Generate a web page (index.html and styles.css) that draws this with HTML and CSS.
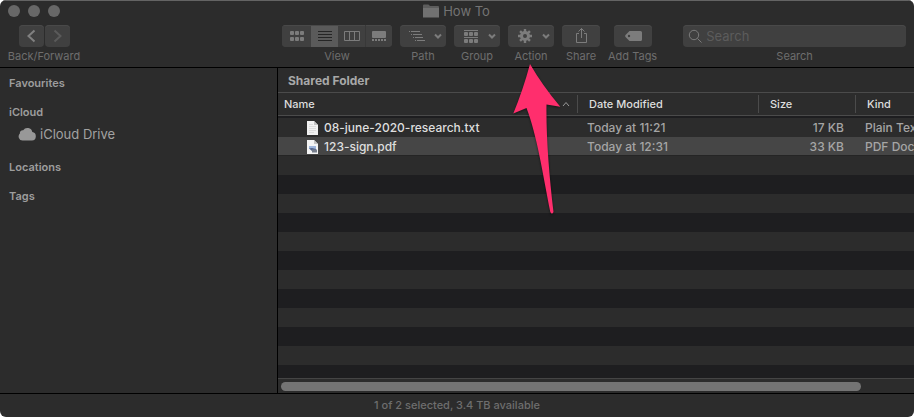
FILE: index.html
```html
<!DOCTYPE html>
<html lang="en">
<head>
<meta charset="utf-8">
<title>How To</title>
<link rel="stylesheet" href="styles.css">
</head>
<body>
<div class="window">
  <header class="chrome">
    <div class="titlebar">
      <div class="lights"><i></i><i></i><i></i></div>
      <svg class="folder" width="16" height="14" viewBox="0 0 16 14"><path d="M0 1.5Q0 .5 1 .5H5.5L7 2H15Q16 2 16 3V13H0Z" fill="#5d5d5d"/><path d="M0 4H16V13.5H0Z" fill="#717171"/></svg>
      <h1>How To</h1>
    </div>
    <div class="toolbar">
      <div class="tool nav-tool">
        <div class="pair">
          <button class="btn" aria-label="Back"><svg width="25" height="22" viewBox="0 0 25 22"><path d="M15.5 5.5 9.5 11l6 5.500" class="stroke bright"/></svg></button>
          <button class="btn" aria-label="Forward"><svg width="25" height="22" viewBox="0 0 25 22"><path d="M9.500 5.500 15.500 11l-6 5.500" class="stroke dim"/></svg></button>
        </div>
        <span class="label">Back/Forward</span>
      </div>
      <div class="tool">
        <div class="segments">
          <button class="seg" aria-label="Icons"><svg width="16" height="12" viewBox="0 0 16 12"><g fill="#7c7c7c"><rect x="1" y="1" width="4" height="4" rx="1"/><rect x="6" y="1" width="4" height="4" rx="1"/><rect x="11" y="1" width="4" height="4" rx="1"/><rect x="1" y="7" width="4" height="4" rx="1"/><rect x="6" y="7" width="4" height="4" rx="1"/><rect x="11" y="7" width="4" height="4" rx="1"/></g></svg></button>
          <button class="seg seg-on" aria-label="List"><svg width="14" height="12" viewBox="0 0 14 12"><path d="M0 1.500H14M0 4.500H14M0 7.500H14M0 10.500H14" stroke="#252525"/></svg></button>
          <button class="seg" aria-label="Columns"><svg width="16" height="12" viewBox="0 0 16 12"><path d="M.5 1.500H15.500V10.500H.5ZM5.500 1.500V10.500M10.500 1.500V10.500" fill="none" stroke="#7c7c7c"/></svg></button>
          <button class="seg" aria-label="Gallery"><svg width="16" height="12" viewBox="0 0 16 12"><rect x="1" y="1" width="14" height="7" rx="1" fill="#7c7c7c"/><path d="M1 10H15" stroke="#7c7c7c" stroke-width="2" stroke-dasharray="2 1"/></svg></button>
        </div>
        <span class="label">View</span>
      </div>
      <div class="tool">
        <button class="btn menu" aria-label="Path"><svg width="46" height="22" viewBox="0 0 46 22"><path d="M9 6.500h1M11 6.500h9M11 9.500h1M13 9.500h9M13 12.500h1M15 12.500h8M15 15.500h1M17 15.500h8" class="line"/><path d="M35 9.500l3 3 3-3" class="chev"/></svg></button>
        <span class="label">Path</span>
      </div>
      <div class="tool">
        <button class="btn menu" aria-label="Group"><svg width="46" height="22" viewBox="0 0 46 22"><path d="M10 5.500H24M10 12.500H24" class="line"/><g fill="#7c7c7c"><rect x="10" y="7" width="4" height="4" rx="1"/><rect x="15" y="7" width="4" height="4" rx="1"/><rect x="20" y="7" width="4" height="4" rx="1"/><rect x="10" y="14" width="4" height="4" rx="1"/><rect x="15" y="14" width="4" height="4" rx="1"/><rect x="20" y="14" width="4" height="4" rx="1"/></g><path d="M35 9.500l3 3 3-3" class="chev"/></svg></button>
        <span class="label">Group</span>
      </div>
      <div class="tool">
        <button class="btn menu" aria-label="Action"><svg width="46" height="22" viewBox="0 0 46 22"><circle cx="17" cy="11" r="3.500" fill="none" stroke="#7c7c7c" stroke-width="3"/><g stroke="#7c7c7c" stroke-width="2.400"><path d="M17 4v3M17 15v3M10 11h3M21 11h3M12.050 6.050l2.100 2.100M19.850 13.850l2.100 2.100M21.950 6.050l-2.100 2.100M14.150 13.850l-2.100 2.100"/></g><path d="M35 9.500l3 3 3-3" class="chev"/></svg></button>
        <span class="label">Action</span>
      </div>
      <div class="tool">
        <button class="btn single" aria-label="Share"><svg width="38" height="22" viewBox="0 0 38 22"><path d="M17 8.500H14.500V17.500H24.500V8.500H22M19.500 13V3.500M16.500 6.500l3-3 3 3" class="line"/></svg></button>
        <span class="label">Share</span>
      </div>
      <div class="tool">
        <button class="btn single" aria-label="Add Tags"><svg width="38" height="22" viewBox="0 0 38 22"><path fill-rule="evenodd" d="M15.500 6H26.500Q28 6 28 7.500V14.500Q28 16 26.500 16H15.500L11.500 12Q10.700 11 11.500 10ZM15 9.800A1.200 1.200 0 1 0 15 12.200 1.200 1.200 0 1 0 15 9.800Z" fill="#7c7c7c"/></svg></button>
        <span class="label">Add Tags</span>
      </div>
      <div class="tool search">
        <div class="field">
          <svg width="14" height="14" viewBox="0 0 14 14"><circle cx="6" cy="6" r="4.700" class="line"/><path d="M9.500 9.500l4 4" class="line"/></svg>
          <input id="search" type="search" placeholder="Search">
        </div>
        <label class="label" for="search">Search</label>
      </div>
    </div>
  </header>

  <div class="body">
    <nav class="sidebar">
      <h2>Favourites</h2>
      <h2>iCloud</h2>
      <a href="#drive" class="place"><svg width="18" height="14" viewBox="0 0 18 14"><path d="M4.500 13.500A4 4 0 0 1 1.900 6.600 2.900 2.900 0 0 1 5.200 3.200 5 5 0 0 1 14.300 5 4.300 4.300 0 0 1 14 13.500Z" fill="#989898"/></svg>iCloud Drive</a>
      <h2>Locations</h2>
      <h2>Tags</h2>
    </nav>
    <main class="content">
      <h2 class="folder-name">Shared Folder</h2>
      <div class="files">
        <table>
          <colgroup><col class="c-name"><col class="c-date"><col class="c-size"><col class="c-kind"></colgroup>
          <thead>
            <tr>
              <th><div class="head">Name<svg width="8" height="6" viewBox="0 0 8 6"><path d="M1 5l3-3.500L7 5" class="sort"/></svg></div></th>
              <th><div class="head">Date Modified</div></th>
              <th><div class="head">Size</div></th>
              <th><div class="head">Kind</div></th>
            </tr>
          </thead>
          <tbody>
            <tr>
              <td><div class="file"><svg width="11" height="14" viewBox="0 0 11 14"><path d="M0 0H7L11 4V14H0Z" fill="#f1f1f1"/><path d="M7 0V4H11Z" fill="#c3c3c3"/><path d="M2 3.500H6M2 5.500H9M2 7.500H9M2 9.500H9M2 11.500H7" stroke="#dcdcdc"/></svg>08-june-2020-research.txt</div></td>
              <td>Today at 11:21</td><td>17 KB</td><td>Plain Text</td>
            </tr>
            <tr class="selected">
              <td><div class="file"><svg width="11" height="14" viewBox="0 0 11 14"><path d="M0 0H7L11 4V14H0Z" fill="#f4f4f4"/><path d="M7 0V4H11Z" fill="#c3c3c3"/><path d="M2 6H9V9H2Z" fill="#9fb6dc"/><path d="M2 8.500L5 8 9 9V11H5Z" fill="#52638a"/><path d="M5 9.500H10V12.500H5Z" fill="#777e8c"/></svg>123-sign.pdf</div></td>
              <td>Today at 12:31</td><td>33 KB</td><td>PDF Document</td>
            </tr>
          </tbody>
        </table>
      </div>
      <div class="scroller"><div class="thumb"></div></div>
    </main>
  </div>
  <footer class="status">1 of 2 selected, 3.4 TB available</footer>

  <svg class="pointer" width="50" height="154" viewBox="0 0 50 154"><path d="M20 4Q32 25 50.300 46.800L36.500 44.500C36 75 39 115 43.500 152Q42 155 40.300 152C33 115 27 75 16.500 48L3.300 53.500Q13 30 20 4Z" fill="#ff2e6d"/></svg>
</div>
</body>
</html>
```
FILE: styles.css
```css
* { box-sizing: border-box; }

body {
  margin: 0;
  background: #fff;
  color: #9d9d9d;
  font: 11px/16px Inter, "Liberation Sans", sans-serif;
}

h1, h2 { margin: 0; font-size: inherit; }

button { padding: 0; border: 0; font: inherit; }

svg { display: block; flex: none; }

.window {
  position: relative;
  display: flex;
  flex-direction: column;
  height: 100vh;
  overflow: hidden;
  border-radius: 6px;
  background: #2c2c2c;
}

.chrome {
  flex: none;
  border-top: 1px solid #646464;
  border-bottom: 1px solid #000;
}

.titlebar {
  display: grid;
  grid-template-columns: 1fr auto auto 1fr;
  align-items: center;
  gap: 4px;
  height: 20px;
  padding: 0 9px 0 8px;
}

.titlebar h1 {
  color: #747474;
  font-size: 13px;
  font-weight: 400;
}

.lights { display: flex; gap: 8px; }

.lights i {
  width: 12px;
  height: 12px;
  border-radius: 50%;
  background: #686868;
}

.toolbar {
  display: flex;
  gap: 8px;
  height: 46px;
  padding: 4px 8px 0;
}

.tool {
  display: flex;
  flex-direction: column;
  flex: none;
  align-items: center;
  gap: 1px;
}

.nav-tool { width: 72px; margin-right: 194px; }

.label { color: #6e6e6e; white-space: nowrap; }

.pair { display: flex; gap: 1px; }

.btn, .segments, .field {
  height: 22px;
  overflow: hidden;
  border-radius: 4px;
  background: #404040;
  box-shadow: inset 0 1px #494949;
}

.segments { display: flex; }

.seg {
  display: grid;
  place-items: center;
  width: 27px;
  background: #404040;
  box-shadow: inset 0 1px #494949;
}

.seg:first-child { width: 29px; }
.seg:last-child { border-left: 1px solid #383838; }

.seg-on { background: #5a5a5a; }

.line, .chev, .stroke, .sort { fill: none; stroke: #7c7c7c; }
.chev { stroke-width: 2; }
.stroke { stroke-width: 2; }
.bright { stroke: #808080; }
.dim { stroke: #5a5a5a; }
.sort { stroke: #999; }

.search { flex: 1; min-width: 0; margin-left: 18px; }

.field {
  display: flex;
  align-items: center;
  gap: 4px;
  width: 100%;
  padding: 0 5px;
}

.field input {
  flex: 1;
  min-width: 0;
  padding: 0;
  border: 0;
  outline: 0;
  background: none;
  color: #9d9d9d;
  font: 13px/16px Inter, "Liberation Sans", sans-serif;
}

.field input::placeholder { color: #5c5c5c; opacity: 1; }

.body { display: flex; flex: 1; min-height: 0; }

.sidebar {
  flex: none;
  width: 278px;
  padding: 5px 9px;
  border-right: 1px solid #000;
}

.sidebar h2 {
  margin-bottom: 9px;
  font-weight: 600;
  line-height: 20px;
}

.place {
  display: flex;
  align-items: center;
  gap: 4px;
  height: 24px;
  margin: -9px 0 11px;
  padding-left: 9px;
  color: #a2a2a2;
  font-size: 13px;
  text-decoration: none;
}

.content {
  display: flex;
  flex: 1;
  flex-direction: column;
  min-width: 0;
}

.folder-name {
  height: 25px;
  padding-left: 10px;
  border-bottom: 1px solid #4b4b4b;
  color: #a8a8a8;
  font-size: 12px;
  font-weight: 700;
  line-height: 25px;
}

.files {
  flex: 1;
  min-height: 0;
  overflow: hidden;
  background: repeating-linear-gradient(#2c2c2c 0 19px, #1e1e20 19px 38px) 0 25px;
}

table {
  width: 736px;
  border-collapse: separate;
  border-spacing: 0;
  table-layout: fixed;
}

.c-name { width: 300px; }
.c-date { width: 181px; }
.c-size { width: 97px; }

th {
  height: 25px;
  padding: 2px 0 5px;
  background: linear-gradient(#2c2c2c 0 22px, #4b4b4b 22px 23px, #1e1e20 23px);
  color: #dedede;
  font-weight: 500;
  text-align: left;
}

.head {
  display: flex;
  align-items: center;
  justify-content: space-between;
  height: 18px;
  padding: 0 7px 0 11px;
  border-right: 1px solid #4b4b4b;
}

th:first-child .head { padding-left: 6px; }

td {
  height: 19px;
  padding: 1px 12px 0 9px;
  color: #a5a5a5;
  font-size: 12px;
  font-weight: 500;
  line-height: 18px;
  white-space: nowrap;
}

td:nth-child(1) { padding-left: 29px; color: #dedede; }
td:nth-child(3) { text-align: right; }

.selected td { background: #464646; box-shadow: inset 0 -1px #252525; }

.file { display: flex; align-items: center; gap: 6px; height: 18px; }

.scroller {
  flex: none;
  height: 15px;
  padding: 3px;
  border-top: 1px solid #454545;
}

.thumb {
  width: 92%;
  height: 9px;
  border-radius: 5px;
  background: #747474;
}

.status {
  flex: none;
  height: 24px;
  border-top: 1px solid #000;
  color: #6e6e6e;
  font-weight: 500;
  line-height: 23px;
  text-align: center;
}

.pointer {
  position: absolute;
  top: 60px;
  left: 510px;
  overflow: visible;
  filter: drop-shadow(0 1px 1px rgba(0, 0, 0, 0.5));
}
```
